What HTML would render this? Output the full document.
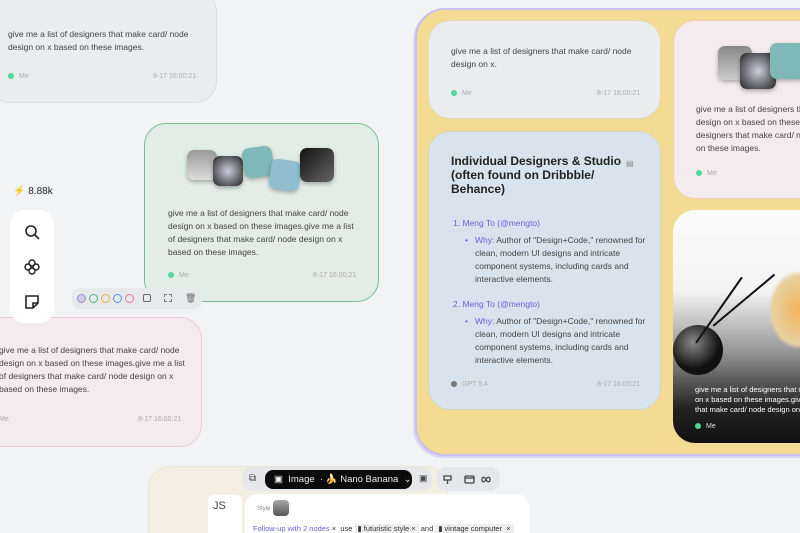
<!DOCTYPE html>
<html><head><meta charset="utf-8"><style>
*{box-sizing:border-box;margin:0;padding:0}
html,body{width:800px;height:533px;overflow:hidden}
body{background:#f2f3f5;font-family:"Liberation Sans",sans-serif;position:relative;color:#333}
#wrap{position:absolute;left:0;top:0;width:800px;height:533px;overflow:hidden}
.a{position:absolute}
.card{position:absolute;border-radius:22px;font-size:8.5px;line-height:13px;color:#444;overflow:hidden}
.meta{position:absolute;font-size:7px;color:#aaa;white-space:nowrap}
.dot{display:inline-block;width:6px;height:6px;border-radius:50%;background:#4ed89a;margin-right:5px;vertical-align:-1px}
.thumb{position:absolute;width:30px;height:30px;border-radius:7px;box-shadow:0 2px 4px rgba(0,0,0,.3)}
.blue{color:#6b5fd6}
</style></head><body><div id="wrap">
<div class="card" style="left:-12px;top:-10px;width:229px;height:113px;background:#ebecee;border:1px solid #dcdde0">
 <div class="a" style="left:19px;top:37px;width:200px">give me a list of designers that make card/ node design on x based on these images.</div>
 <div class="meta" style="left:19px;top:79px"><span class="dot"></span>Me</div>
 <div class="meta" style="left:164px;top:79px">8-17 16:00:21</div>
</div>
<div class="card" style="left:144px;top:123px;width:235px;height:179px;background:#e3ede7;border:1.5px solid #74c093">
 <div class="thumb" style="left:42px;top:26px;background:linear-gradient(#999,#ddd)"></div>
 <div class="thumb" style="left:68px;top:32px;background:radial-gradient(#ccd,#222)"></div>
 <div class="thumb" style="left:98px;top:23px;background:#7fb8b8;transform:rotate(-8deg)"></div>
 <div class="thumb" style="left:125px;top:36px;background:#8fbfd0;transform:rotate(8deg)"></div>
 <div class="thumb" style="left:155px;top:24px;width:34px;height:34px;background:linear-gradient(135deg,#111,#666)"></div>
 <div class="a" style="left:23px;top:83px;width:195px">give me a list of designers that make card/ node design on x based on these images.give me a list of designers that make card/ node design on x based on these images.</div>
 <div class="meta" style="left:23px;top:145px"><span class="dot"></span>Me</div>
 <div class="meta" style="left:168px;top:145px">8-17 16:00:21</div>
</div>
<div class="card" style="left:-20px;top:317px;width:222px;height:130px;background:#f4ebee;border:1px solid #f0cad3">
 <div class="a" style="left:18px;top:26px;width:195px">give me a list of designers that make card/ node design on x based on these images.give me a list of designers that make card/ node design on x based on these images.</div>
 <div class="meta" style="left:18px;top:95px">Me</div>
 <div class="meta" style="left:157px;top:95px">8-17 16:00:21</div>
</div>
<div class="a" style="left:13px;top:186px;font-size:10px;color:#222">⚡ 8.88k</div>
<div class="a" style="left:10px;top:210px;width:44px;height:113px;background:#fff;border-radius:14px">
 <svg class="a" style="left:14px;top:14px" width="16" height="16" viewBox="0 0 16 16" fill="none" stroke="#222" stroke-width="1.6"><circle cx="7" cy="7" r="5"/><path d="M11 11l4 4"/></svg>
 <svg class="a" style="left:14px;top:49px" width="16" height="16" viewBox="0 0 16 16" fill="none" stroke="#222" stroke-width="1.4"><circle cx="8" cy="4" r="3"/><circle cx="8" cy="12" r="3"/><circle cx="4" cy="8" r="3"/><circle cx="12" cy="8" r="3"/></svg>
 <svg class="a" style="left:14px;top:84px" width="16" height="16" viewBox="0 0 16 16" fill="none" stroke="#222" stroke-width="1.6"><path d="M2 2h12v7l-5 5H2z"/><path d="M9 14V9h5"/></svg>
</div>
<div class="a" style="left:72px;top:288px;width:130px;height:21px;background:#e8e9eb;border-radius:8px">
 <div class="a" style="left:5px;top:6px;width:9px;height:9px;border-radius:50%;border:1.5px solid #9b90d8;background:#d0cbea"></div>
 <div class="a" style="left:17px;top:6px;width:9px;height:9px;border-radius:50%;border:1.5px solid #4fb085"></div>
 <div class="a" style="left:29px;top:6px;width:9px;height:9px;border-radius:50%;border:1.5px solid #e0b840"></div>
 <div class="a" style="left:41px;top:6px;width:9px;height:9px;border-radius:50%;border:1.5px solid #4f8ee0"></div>
 <div class="a" style="left:53px;top:6px;width:9px;height:9px;border-radius:50%;border:1.5px solid #e07ea0"></div>
 <div class="a" style="left:71px;top:6px;width:8px;height:8px;border:1.2px solid #666;border-radius:2px"></div>
 <div class="a" style="left:92px;top:6px;width:8px;height:8px;border:1.2px dashed #777"></div>
 <div class="a" style="left:113px;top:5px;font-size:9px;color:#666">🗑</div>
</div>
<div class="a" style="left:415px;top:8px;width:420px;height:448px;background:#f3db94;border:2px solid #c8bff0;border-radius:30px;box-shadow:-2px 2px 0 #ddd6f6"></div>
<div class="card" style="left:428px;top:20px;width:233px;height:99px;background:#ebeced;border:1px solid #e0d9b8">
 <div class="a" style="left:22px;top:24px;width:200px">give me a list of designers that make card/ node design on x.</div>
 <div class="meta" style="left:22px;top:66px"><span class="dot"></span>Me</div>
 <div class="meta" style="left:168px;top:66px">8-17 16:00:21</div>
</div>
<div class="card" style="left:428px;top:131px;width:233px;height:279px;background:#d9e3ee;border:1px solid #d2d8c0">
 <div class="a" style="left:22px;top:22px;width:175px;font-size:12px;line-height:14px;font-weight:bold;color:#222">Individual Designers &amp; Studio (often found on Dribbble/ Behance)</div>
 <div class="a" style="left:197px;top:25px;font-size:8px;color:#888">▤</div>
 <div class="a" style="left:24px;top:85px;font-size:8.5px"><span class="blue">1. Meng To (@mengto)</span></div>
 <div class="a" style="left:46px;top:102px;width:180px"><span class="a" style="left:-10px;color:#6b5fd6">•</span><span class="blue">Why:</span> Author of "Design+Code," renowned for clean, modern UI designs and intricate component systems, including cards and interactive elements.</div>
 <div class="a" style="left:24px;top:166px;font-size:8.5px"><span class="blue">2. Meng To (@mengto)</span></div>
 <div class="a" style="left:46px;top:183px;width:180px"><span class="a" style="left:-10px;color:#6b5fd6">•</span><span class="blue">Why:</span> Author of "Design+Code," renowned for clean, modern UI designs and intricate component systems, including cards and interactive elements.</div>
 <div class="meta" style="left:22px;top:246px"><span class="dot" style="background:#777"></span>GPT 5.4</div>
 <div class="meta" style="left:168px;top:246px">8-17 16:00:21</div>
</div>
<div class="card" style="left:673px;top:20px;width:160px;height:179px;background:#f4ebee;border:1px solid #efcfb0">
 <div class="thumb" style="left:44px;top:25px;width:34px;height:34px;background:linear-gradient(#888,#ccc)"></div>
 <div class="thumb" style="left:66px;top:32px;width:36px;height:36px;background:radial-gradient(#ccd,#222)"></div>
 <div class="thumb" style="left:96px;top:22px;width:36px;height:36px;background:#7fb8b8"></div>
 <div class="a" style="left:22px;top:82px;width:200px">give me a list of designers that make card/ node design on x based on these images.give me a list of designers that make card/ node design on x based on these images.</div>
 <div class="meta" style="left:22px;top:146px"><span class="dot"></span>Me</div>
</div>
<div class="card" style="left:673px;top:210px;width:160px;height:233px;background:linear-gradient(#fbfbfb 0%,#f3f3f3 35%,#999 60%,#222 85%,#111 100%)">
 <div class="a" style="left:0px;top:115px;width:50px;height:50px;border-radius:50%;background:radial-gradient(circle at 40% 35%,#888,#111 60%)"></div>
 <div class="a" style="left:45px;top:60px;width:1.5px;height:80px;background:#111;transform:rotate(35deg)"></div>
 <div class="a" style="left:70px;top:50px;width:1.5px;height:80px;background:#111;transform:rotate(50deg)"></div>
 <div class="a" style="left:95px;top:60px;width:60px;height:80px;border-radius:40%;background:radial-gradient(#f2b45c,#e8d0a0 60%,transparent 70%)"></div>
 <div class="a" style="left:22px;top:175px;width:150px;font-size:7.5px;line-height:10px;color:#fff;white-space:nowrap">give me a list of designers that m<br>on x based on these images.give<br>that make card/ node design on</div>
 <div class="meta" style="left:22px;top:210px;color:#ddd"><span class="dot"></span>Me</div>
</div>
<div class="a" style="left:148px;top:466px;width:300px;height:67px;background:#f3efe3;border:1px solid #ece6d4;border-bottom:none;border-radius:22px 22px 0 0"></div>
<div class="a" style="left:208px;top:495px;width:34px;height:38px;background:#fff;border-radius:6px 6px 0 0;font-size:11px;padding:5px;color:#444">JS</div>
<div class="a" style="left:242px;top:467px;width:190px;height:24px;background:#e6e7ea;border-radius:10px"></div>
<div class="a" style="left:249px;top:473px;font-size:10px;color:#444">⧉</div>
<div class="a" style="left:265px;top:470px;width:147px;height:19px;background:#0b0b0b;border-radius:8px;color:#eee;font-size:9.5px;line-height:19px;padding-left:9px;white-space:nowrap">▣ &nbsp;Image &nbsp;· 🍌 Nano Banana &nbsp;⌄</div>
<div class="a" style="left:419px;top:473px;font-size:9px;color:#444">▣</div>
<div class="a" style="left:436px;top:467px;width:64px;height:24px;background:#e6e7ea;border-radius:10px"></div>
<svg class="a" style="left:442px;top:474px" width="54" height="11" viewBox="0 0 54 11" fill="none" stroke="#444" stroke-width="1.3"><path d="M2 2h7v4H2zM5.5 6v4"/><rect x="23" y="2" width="9" height="7" rx="1"/><path d="M23 4h9"/><path d="M44 5.5c1.5-3 4-3 4 0s-2.5 3-4 0-4-3-4 0 2.5 3 4 0z"/></svg>
<div class="a" style="left:245px;top:494px;width:284px;height:39px;background:#fff;border-radius:12px 12px 0 0">
 <div class="a" style="left:12px;top:12px;font-size:6px;color:#888">Style</div>
 <div class="a" style="left:28px;top:6px;width:16px;height:16px;border-radius:4px;background:linear-gradient(#aaa,#555)"></div>
 <div class="a" style="left:8px;top:30px;font-size:7.5px;line-height:9px;color:#333;white-space:nowrap"><span class="blue">Follow-up with 2 nodes</span> × &nbsp;use <span style="background:#eee;padding:0 3px">▮ futuristic style ×</span> and <span style="background:#eee;padding:0 3px">▮ vintage computer &nbsp;×</span></div>
</div>
</div></body></html>
